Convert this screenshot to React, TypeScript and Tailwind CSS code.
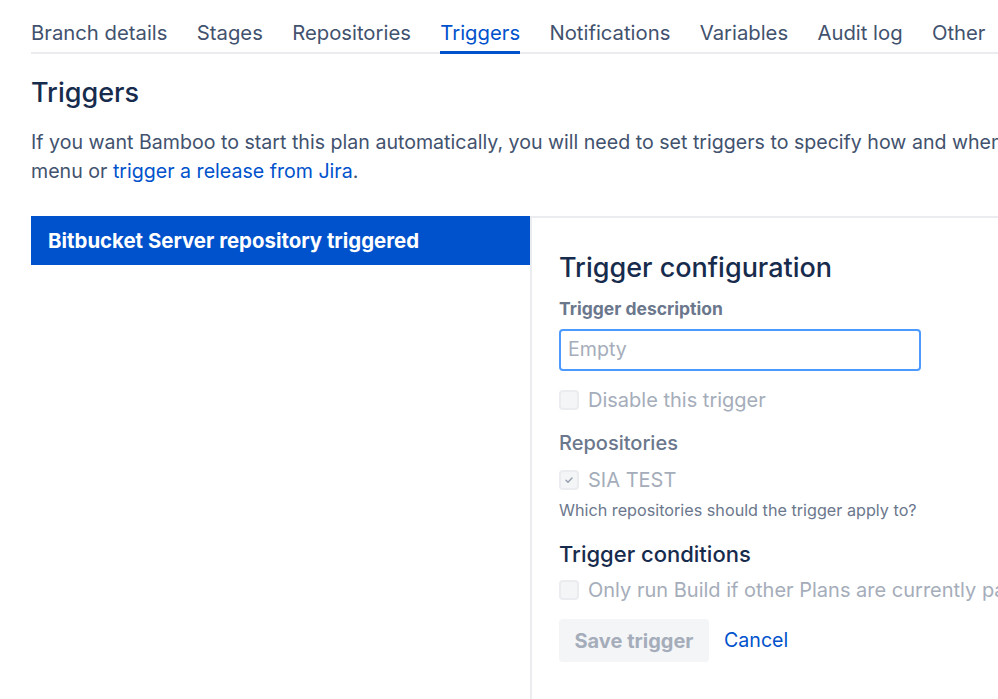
import React from 'react';

const tabs = ['Branch details', 'Stages', 'Repositories', 'Triggers', 'Notifications', 'Variables', 'Audit log', 'Other'];

const Checkbox = ({ checked }: { checked?: boolean }) => (
  <span className="w-[20px] h-[20px] rounded-[4px] bg-[#F4F5F7] border-2 border-[#EBECF0] flex items-center justify-center shrink-0">
    {checked && (
      <svg width="12" height="12" viewBox="0 0 12 12" fill="none">
        <path d="M3 6.2l2 2 4-4.2" stroke="#97A0AF" strokeWidth="1.5" strokeLinecap="round" strokeLinejoin="round" />
      </svg>
    )}
  </span>
);

const CheckRow = ({ label, checked, className }: { label: string; checked?: boolean; className?: string }) => (
  <div className={`flex items-center gap-[9px] h-[24px] whitespace-nowrap ${className ?? ''}`}>
    <Checkbox checked={checked} />
    <span className="text-[20px] text-[#A5ADBA]">{label}</span>
  </div>
);

export default function App() {
  return (
    <div
      className="w-[998px] h-[699px] overflow-hidden bg-white pl-[31px]"
      style={{ fontFamily: 'Inter, "Noto Sans", sans-serif' }}
    >
      {/* Tabs */}
      <div className="flex gap-[29.3px] border-b-2 border-[#EBECF0] pt-[21px] w-[1100px]">
        {tabs.map((t) => (
          <div
            key={t}
            className={`pb-[6px] -mb-[2px] border-b-[3px] text-[20.3px] leading-[24px] whitespace-nowrap ${
              t === 'Triggers' ? 'border-[#0052CC] text-[#0052CC]' : 'border-transparent text-[#42526E]'
            }`}
          >
            {t}
          </div>
        ))}
      </div>

      <h1 className="mt-[22px] text-[27px] leading-[34px] font-medium text-[#172B4D]">Triggers</h1>

      <div className="mt-[18px] text-[19.6px] leading-[29px] text-[#42526E]">
        <div className="whitespace-nowrap">
          If you want Bamboo to start this plan automatically, you will need to set triggers to specify how and when it should start. You can also run it manually from the Run
        </div>
        <div className="whitespace-nowrap">
          menu or <span className="text-[#0052CC]">trigger a release from Jira</span>.
        </div>
      </div>

      {/* Panels */}
      <div className="mt-[30px] flex h-[500px]">
        <div className="w-[499px] shrink-0">
          <div className="h-[49px] bg-[#0052CC] flex items-center pl-[17px] pt-[2px] text-white font-bold text-[20.4px] whitespace-nowrap">
            Bitbucket Server repository triggered
          </div>
        </div>
        <div className="flex-1 min-w-0 border-l-2 border-t-2 border-[#EBECF0] pl-[27px] pt-[33px]">
          <h2 className="text-[27px] leading-[34px] font-medium text-[#172B4D] whitespace-nowrap">Trigger configuration</h2>
          <div className="mt-[14px] text-[17.5px] leading-[20px] font-bold text-[#6B778C]">Trigger description</div>
          <div className="mt-[10px] w-[362px] h-[42px] border-2 border-[#4C9AFF] rounded-[4px] flex items-center pl-[7px] text-[19.6px] text-[#A5ADBA]">
            Empty
          </div>
          <CheckRow className="mt-[17px]" label="Disable this trigger" />
          <div className="mt-[19px] text-[20px] leading-[24px] font-medium text-[#6B778C]">Repositories</div>
          <CheckRow className="mt-[13px]" label="SIA TEST" checked />
          <div className="mt-[8px] text-[16.2px] leading-[20px] text-[#6B778C] whitespace-nowrap">
            Which repositories should the trigger apply to?
          </div>
          <div className="mt-[20px] text-[22px] leading-[28px] font-medium text-[#172B4D] whitespace-nowrap">Trigger conditions</div>
          <CheckRow className="mt-[10px]" label="Only run Build if other Plans are currently passing" />
          <div className="mt-[17px] flex items-center gap-[15px]">
            <div className="w-[150px] h-[43px] rounded-[4px] bg-[#F4F5F7] flex items-center justify-center text-[20px] font-bold text-[#A5ADBA]">
              Save trigger
            </div>
            <span className="text-[19.6px] text-[#0052CC]">Cancel</span>
          </div>
        </div>
      </div>
    </div>
  );
}
